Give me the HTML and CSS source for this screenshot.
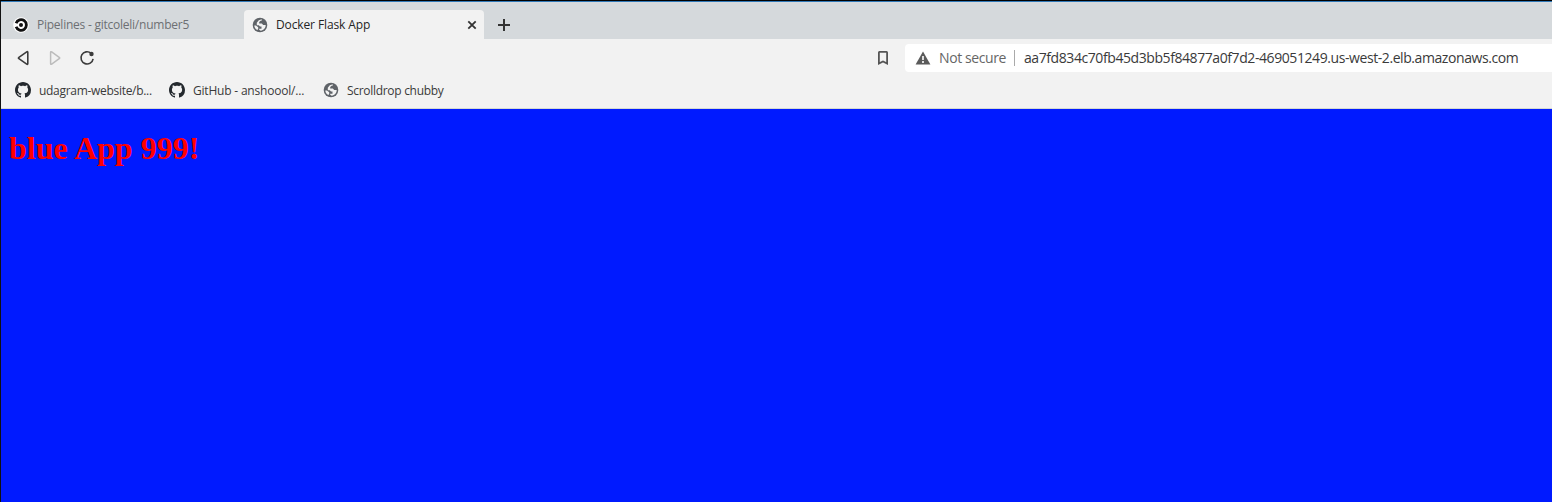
FILE: index.html
```html
<!DOCTYPE html>
<html lang="en">
<head>
<meta charset="utf-8">
<title>Docker Flask App</title>
<link rel="stylesheet" href="styles.css">
</head>
<body>
<svg class="defs" width="0" height="0" aria-hidden="true">
  <symbol id="globe" viewBox="0 0 16 16">
    <circle cx="8" cy="8" r="7.3" fill="#5f6368"/>
    <path d="M9.8 2.3 9.6 3.7H8.6L7.2 4.9V6.6H9.8L11.2 8H13.7C13.8 10.9 11.7 13.3 8.7 13.7L7.2 12.7V11.7H9.5V9.5H8L6.8 8.3H4.8V5.7L6.8 3.2ZM2.3 8.4H3.9L6.2 10.2V12L5.3 13C3.6 12 2.4 10.4 2.3 8.4Z" fill="#f2f2f2"/>
  </symbol>
  <symbol id="github" viewBox="0 0 16 16">
    <path fill="#24292e" d="M8 0C3.58 0 0 3.58 0 8c0 3.54 2.29 6.53 5.47 7.59.4.07.55-.17.55-.38 0-.19-.01-.82-.01-1.49-2.01.37-2.53-.49-2.69-.94-.09-.23-.48-.94-.82-1.13-.28-.15-.68-.52-.01-.53.63-.01 1.08.58 1.23.82.72 1.21 1.87.87 2.33.66.07-.52.28-.87.51-1.07-1.78-.2-3.64-.89-3.64-3.95 0-.87.31-1.59.82-2.15-.08-.2-.36-1.02.08-2.12 0 0 .67-.21 2.2.82.64-.18 1.32-.27 2-.27s1.36.09 2 .27c1.53-1.04 2.2-.82 2.2-.82.44 1.1.16 1.92.08 2.12.51.56.82 1.27.82 2.15 0 3.07-1.87 3.75-3.65 3.95.29.25.54.73.54 1.48 0 1.07-.01 1.93-.01 2.2 0 .21.15.46.55.38A8.01 8.01 0 0 0 16 8c0-4.42-3.58-8-8-8z"/>
  </symbol>
</svg>
<div class="window">
  <header class="tabs">
    <div class="tab">
      <svg class="icon" viewBox="0 0 16 16"><circle cx="8" cy="8" r="7.8" fill="#fff"/><path d="M3.1 6.2A5.3 5.3 0 1 1 3.1 9.8" fill="none" stroke="#111" stroke-width="2.8"/><circle cx="8" cy="8" r="2" fill="#111"/></svg>
      <span class="label pipelines">Pipelines - gitcoleli/number5</span>
    </div>
    <div class="tab active">
      <svg class="icon"><use href="#globe"/></svg>
      <span class="label docker">Docker Flask App</span>
      <svg class="close" viewBox="0 0 10 10"><path d="M1.3 1.3 8.7 8.7M8.7 1.3 1.3 8.7" stroke="#333" stroke-width="1.8"/></svg>
    </div>
    <svg class="plus" viewBox="0 0 12 12"><path d="M6 0V12M0 6H12" stroke="#333" stroke-width="2"/></svg>
  </header>
  <nav class="toolbar">
    <svg class="nav" viewBox="0 0 16 16"><path d="M12.8 2.4V13.6Q12.8 14.8 11.7 14.1L3.9 8.7Q2.9 8 3.9 7.3L11.7 1.9Q12.8 1.2 12.8 2.4Z" fill="none" stroke="#3c3c3c" stroke-width="1.6"/></svg>
    <svg class="nav" viewBox="0 0 16 16"><path d="M3.6 2.4V13.6Q3.6 14.8 4.7 14.1L12.2 8.7Q13.2 8 12.2 7.3L4.7 1.9Q3.6 1.2 3.6 2.4Z" fill="none" stroke="#bcbcbc" stroke-width="1.5"/></svg>
    <svg class="nav" viewBox="0 0 16 16"><path d="M12 3.2A6.1 6.1 0 1 0 14.1 8.8" fill="none" stroke="#3c3c3c" stroke-width="1.6"/><circle cx="12.5" cy="4" r="2.2" fill="#3c3c3c"/></svg>
    <svg class="bookmark" viewBox="0 0 12 16"><path d="M2.4 1.9H9.6Q10.1 1.9 10.1 2.5V13.6L6 11.4 1.9 13.6V2.5Q1.9 1.9 2.4 1.9Z" fill="none" stroke="#555" stroke-width="1.8"/></svg>
    <div class="address">
      <svg class="warn" viewBox="0 0 16 14"><path d="M8 .5 15.4 13.4H.6Z" fill="#5b5b5b"/><path d="M8 5V9M8 10V12" stroke="#fff" stroke-width="1.6"/></svg>
      <span class="label insecure">Not secure</span>
      <span class="divider"></span>
      <span class="label url">aa7fd834c70fb45d3bb5f84877a0f7d2-469051249.us-west-2.elb.amazonaws.com</span>
    </div>
  </nav>
  <div class="bookmarks">
    <div class="mark first"><svg class="icon"><use href="#github"/></svg><span class="label udagram">udagram-website/b...</span></div>
    <div class="mark second"><svg class="icon"><use href="#github"/></svg><span class="label anshoool">GitHub - anshoool/...</span></div>
    <div class="mark"><svg class="icon"><use href="#globe"/></svg><span class="label chubby">Scrolldrop chubby</span></div>
  </div>
  <main class="page"><h1>blue App 999!</h1></main>
</div>
</body>
</html>
```
FILE: styles.css
```css
* { box-sizing: border-box; }
body { margin: 0; overflow: hidden; background: #001aff; }
.defs { display: none; }
.window {
  height: 502px;
  display: flex;
  flex-direction: column;
  border-left: 1px solid #111;
  border-top: 1px solid #000;
  font: 12px/18px "Open Sans", "Noto Sans", sans-serif;
  color: #3a3a3a;
}
svg { flex: none; }
.icon { width: 16px; height: 16px; }
.label { white-space: nowrap; }
.tabs {
  height: 38px;
  display: flex;
  align-items: flex-end;
  background: #d5d9dc;
  border-top: 1px solid #2f78b7;
}
.tab {
  width: 243px;
  height: 29px;
  display: flex;
  align-items: center;
  gap: 8px;
  padding-left: 12px;
  color: #6d7073;
}
.tab.active {
  width: 240px;
  padding: 0 7px 0 8px;
  background: #f2f2f2;
  border-radius: 4px 4px 0 0;
  color: #252525;
}
.close { width: 10px; height: 10px; margin-left: auto; }
.plus { width: 12px; height: 12px; margin: 0 0 8px 14px; }
.toolbar {
  height: 38px;
  display: flex;
  align-items: center;
  gap: 16px;
  padding-left: 14px;
  background: #f2f2f2;
}
.nav { width: 16px; height: 16px; }
.bookmark { width: 12px; height: 16px; margin-left: auto; }
.address {
  width: 647px;
  height: 28px;
  display: flex;
  align-items: center;
  padding-left: 10px;
  background: #fff;
  border-radius: 4px 0 0 4px;
  font-size: 14px;
}
.warn { width: 16px; height: 14px; }
.insecure { width: 67px; margin-left: 8px; color: #666; }
.divider { width: 1px; height: 16px; margin: 0 9px 0 8px; background: #aaa; }
.bookmarks {
  height: 32px;
  display: flex;
  padding: 5px 0 0 14px;
  background: #f2f2f2;
  border-bottom: 1px solid #d3d8d3;
}
.mark { height: 16px; display: flex; align-items: center; gap: 8px; }
.mark .label { line-height: 16px; padding-top: 1px; }
.first, .second { width: 154px; }
.page { flex: 1; background: #001aff; padding: 0 8px; }
h1 {
  margin: 21px 0;
  font: bold 32px/37px "Liberation Serif", serif;
  color: #f00;
}
.pipelines { letter-spacing: -0.24px; }
.docker { letter-spacing: -0.12px; }
.insecure { letter-spacing: -0.4px; }
.url { letter-spacing: -0.42px; }
.udagram { letter-spacing: -0.3px; }
.anshoool { letter-spacing: -0.2px; }
.chubby { letter-spacing: -0.3px; }
```
